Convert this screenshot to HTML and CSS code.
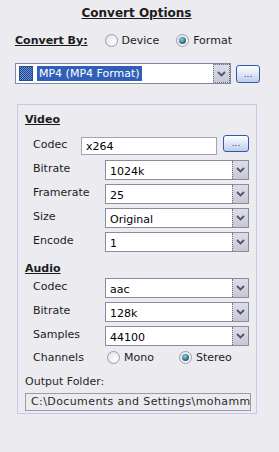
FILE: index.html
```html
<!DOCTYPE html>
<html lang="en">
  <head>
    <title>Convert Options</title>
    <meta charset="utf-8" />
    <link rel="stylesheet" href="styles.css">
  </head>
  <body>
    <h1 class="title">Convert Options</h1>
    <div class="mode-row">
      <span class="heading">Convert By:</span>
      <span class="radio"><span class="dot"></span>Device</span>
      <span class="radio"><span class="dot on"></span>Format</span>
    </div>
    <div class="format-row">
      <div class="combo">
        <span class="fmt-icon"></span>
        <span class="selected">MP4 (MP4 Format)</span>
        <span class="arrow"><svg width="9" height="6" viewBox="0 0 9 6"><path d="M1 1 L4.5 4.5 L8 1" fill="none" stroke="#4b5675" stroke-width="1.8"/></svg></span>
      </div>
      <span class="dots-btn">...</span>
    </div>
    <div class="panel">
      <div class="heading section">Video</div>
      <div class="row codec-row">
        <span class="label short">Codec</span>
        <span class="textbox">x264</span>
        <span class="dots-btn small">...</span>
      </div>
      <div class="row">
        <span class="label">Bitrate</span>
        <div class="select"><span class="value">1024k</span><span class="arrow"><svg width="9" height="6" viewBox="0 0 9 6"><path d="M1 1 L4.5 4.5 L8 1" fill="none" stroke="#4b5675" stroke-width="1.8"/></svg></span></div>
      </div>
      <div class="row">
        <span class="label">Framerate</span>
        <div class="select"><span class="value">25</span><span class="arrow"><svg width="9" height="6" viewBox="0 0 9 6"><path d="M1 1 L4.5 4.5 L8 1" fill="none" stroke="#4b5675" stroke-width="1.8"/></svg></span></div>
      </div>
      <div class="row">
        <span class="label">Size</span>
        <div class="select"><span class="value">Original</span><span class="arrow"><svg width="9" height="6" viewBox="0 0 9 6"><path d="M1 1 L4.5 4.5 L8 1" fill="none" stroke="#4b5675" stroke-width="1.8"/></svg></span></div>
      </div>
      <div class="row">
        <span class="label">Encode</span>
        <div class="select"><span class="value">1</span><span class="arrow"><svg width="9" height="6" viewBox="0 0 9 6"><path d="M1 1 L4.5 4.5 L8 1" fill="none" stroke="#4b5675" stroke-width="1.8"/></svg></span></div>
      </div>

      <div class="heading section">Audio</div>
      <div class="row">
        <span class="label">Codec</span>
        <div class="select"><span class="value">aac</span><span class="arrow"><svg width="9" height="6" viewBox="0 0 9 6"><path d="M1 1 L4.5 4.5 L8 1" fill="none" stroke="#4b5675" stroke-width="1.8"/></svg></span></div>
      </div>
      <div class="row">
        <span class="label">Bitrate</span>
        <div class="select"><span class="value">128k</span><span class="arrow"><svg width="9" height="6" viewBox="0 0 9 6"><path d="M1 1 L4.5 4.5 L8 1" fill="none" stroke="#4b5675" stroke-width="1.8"/></svg></span></div>
      </div>
      <div class="row">
        <span class="label">Samples</span>
        <div class="select"><span class="value">44100</span><span class="arrow"><svg width="9" height="6" viewBox="0 0 9 6"><path d="M1 1 L4.5 4.5 L8 1" fill="none" stroke="#4b5675" stroke-width="1.8"/></svg></span></div>
      </div>
      <div class="row channels">
        <span class="label">Channels</span>
        <span class="radio mono"><span class="dot"></span>Mono</span>
        <span class="radio"><span class="dot on"></span>Stereo</span>
      </div>
      <div class="out-label">Output Folder:</div>
      <div class="out-box">C:\Documents and Settings\mohamm</div>
    </div>
  </body>
</html>
```

FILE: styles.css
```css
body {
  margin: 0;
  background: #ecebf0;
  font-family: "DejaVu Sans", Verdana, sans-serif;
  font-size: 11px;
  color: #1c1c1c;
}
.title {
  width: 273px;
  margin: 0;
  padding-top: 5px;
  font-size: 12px;
  line-height: 16px;
  text-align: center;
  text-decoration: underline;
}
.heading {
  font-weight: bold;
  text-decoration: underline;
}
.mode-row {
  display: flex;
  align-items: center;
  height: 14px;
  margin: 12px 0 0 15px;
}
.mode-row .heading {
  margin-right: 17px;
}
.radio {
  display: flex;
  align-items: center;
  gap: 4px;
  margin-right: 17px;
}
.dot {
  width: 13px;
  height: 13px;
  box-sizing: border-box;
  border: 1px solid #9c9cab;
  border-radius: 50%;
  background: radial-gradient(circle at 65% 65%, #ffffff, #dedde4);
  display: flex;
  align-items: center;
  justify-content: center;
}
.dot.on::after {
  content: "";
  width: 7px;
  height: 7px;
  border-radius: 50%;
  background: radial-gradient(circle at 40% 35%, #8fd0e4, #2a6f8e 60%, #16435c);
}
.format-row {
  display: flex;
  align-items: center;
  gap: 5px;
  margin: 16px 0 0 15px;
}
.combo {
  width: 216px;
  height: 21px;
  box-sizing: border-box;
  border: 1px solid #7f8aa3;
  background: #fff;
  display: flex;
  align-items: center;
}
.fmt-icon {
  width: 14px;
  height: 15px;
  margin-left: 3px;
  background: repeating-conic-gradient(#1d3f86 0 25%, #7096da 0 50%) 0 0 / 2px 2px;
  border: 1px solid #274b94;
  box-sizing: border-box;
}
.selected {
  margin-left: 4px;
  padding: 0 2px;
  line-height: 15px;
  background: #2f5fb9;
  color: #fff;
}
.arrow {
  margin-left: auto;
  width: 17px;
  align-self: stretch;
  box-sizing: border-box;
  border: 1px dotted #6e6e80;
  background: linear-gradient(#dedee8, #c8c8d4);
  display: flex;
  align-items: center;
  justify-content: center;
}
.dots-btn {
  width: 24px;
  height: 18px;
  box-sizing: border-box;
  border: 1px solid #2f5aa8;
  border-radius: 3px;
  background: linear-gradient(#ffffff, #dfe6f6 50%, #bfcdec);
  color: #20396e;
  font-size: 9px;
  line-height: 16px;
  text-align: center;
}
.dots-btn.small {
  width: 26px;
  height: 17px;
  line-height: 15px;
  align-self: flex-start;
  margin-top: 1px;
}
.panel {
  width: 240px;
  box-sizing: border-box;
  margin: 20px 0 0 17px;
  padding: 0 7px 2px 7px;
  border: 1px solid #c9c6ea;
}
.section {
  line-height: 14px;
  margin-top: 8px;
}
.row {
  display: flex;
  align-items: center;
  height: 24px;
  padding-left: 8px;
}
.codec-row {
  margin-top: 7px;
  gap: 6px;
}
.label {
  width: 72px;
  flex: none;
  padding-bottom: 4px;
}
.label.short {
  width: 42px;
}
.textbox {
  width: 136px;
  height: 18px;
  box-sizing: border-box;
  border: 1px solid #a3a3b3;
  background: #fff;
  padding-left: 4px;
  line-height: 17px;
  color: #000;
}
.select {
  width: 144px;
  height: 20px;
  box-sizing: border-box;
  border: 1px solid #8a8b9c;
  background: #fff;
  display: flex;
  align-items: center;
  color: #000;
}
.select .value {
  padding: 2px 0 0 4px;
}
.select .arrow {
  width: 16px;
  border-width: 0 0 0 1px;
}
.channels {
  height: 18px;
}
.channels .label {
  padding-bottom: 0;
}
.radio.mono {
  width: 72px;
  margin: 0 0 0 2px;
}
.out-label {
  margin-top: 9px;
  line-height: 14px;
  color: #2a2a2a;
}
.out-box {
  width: 226px;
  height: 18px;
  box-sizing: border-box;
  margin-top: 4px;
  border: 1px solid #9a9aa8;
  padding-left: 5px;
  line-height: 16px;
  letter-spacing: 0.4px;
  color: #2a2a2a;
  white-space: nowrap;
  overflow: hidden;
}
```
